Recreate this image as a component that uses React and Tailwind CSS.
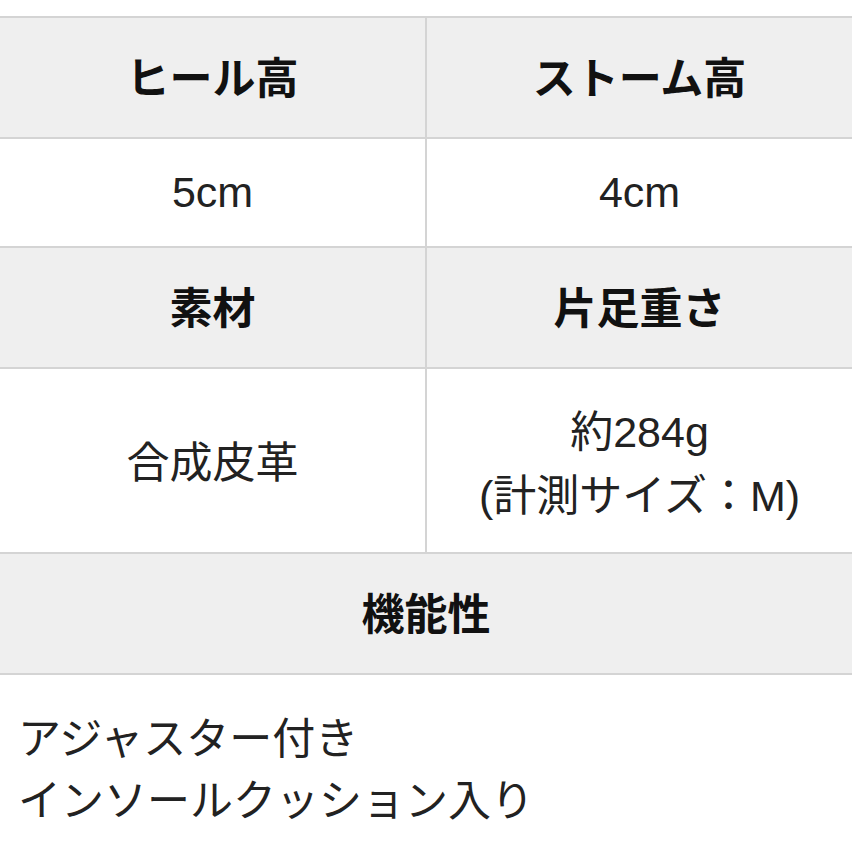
export default function App() {
  const font = { fontFamily: '"Liberation Sans", "Noto Sans CJK JP", "Noto Sans", sans-serif' };
  return (
    <div className="w-[852px] h-[852px] overflow-hidden bg-white text-[#222]" style={font}>
      <div className="mt-[16px] border-t-2 border-[#d4d4d4]">
        {/* ヒール高 / ストーム高 */}
        <div className="grid grid-cols-[427px_1fr] bg-[#efefef] border-b-2 border-[#d4d4d4]">
          <div className="h-[119px] pt-[4px] flex items-center justify-center border-r-2 border-[#d4d4d4] text-[43px] font-bold text-[#111]">
            ヒール高
          </div>
          <div className="h-[119px] pt-[4px] flex items-center justify-center text-[43px] font-bold text-[#111]">
            ストーム高
          </div>
        </div>
        <div className="grid grid-cols-[427px_1fr] border-b-2 border-[#d4d4d4]">
          <div className="h-[107px] flex items-center justify-center border-r-2 border-[#d4d4d4] text-[43px]">
            5cm
          </div>
          <div className="h-[107px] flex items-center justify-center text-[43px]">
            4cm
          </div>
        </div>

        {/* 素材 / 片足重さ */}
        <div className="grid grid-cols-[427px_1fr] bg-[#efefef] border-b-2 border-[#d4d4d4]">
          <div className="h-[119px] pt-[4px] flex items-center justify-center border-r-2 border-[#d4d4d4] text-[43px] font-bold text-[#111]">
            素材
          </div>
          <div className="h-[119px] pt-[4px] flex items-center justify-center text-[43px] font-bold text-[#111]">
            片足重さ
          </div>
        </div>
        <div className="grid grid-cols-[427px_1fr] border-b-2 border-[#d4d4d4]">
          <div className="h-[183px] pt-[6px] flex items-center justify-center border-r-2 border-[#d4d4d4] text-[43px]">
            合成皮革
          </div>
          <div className="h-[183px] flex flex-col items-center justify-center text-[43px] leading-[64px] text-center pt-[6px]">
            <span>約284g</span>
            <span>(計測サイズ：M)</span>
          </div>
        </div>

        {/* 機能性 */}
        <div className="h-[121px] pt-[4px] flex items-center justify-center bg-[#efefef] border-b-2 border-[#d4d4d4] text-[43px] font-bold text-[#111]">
          機能性
        </div>
        <div className="pl-[18px] pt-[33px] text-[43px] leading-[62px]">
          <p>アジャスター付き</p>
          <p>インソールクッション入り</p>
        </div>
      </div>
    </div>
  );
}
